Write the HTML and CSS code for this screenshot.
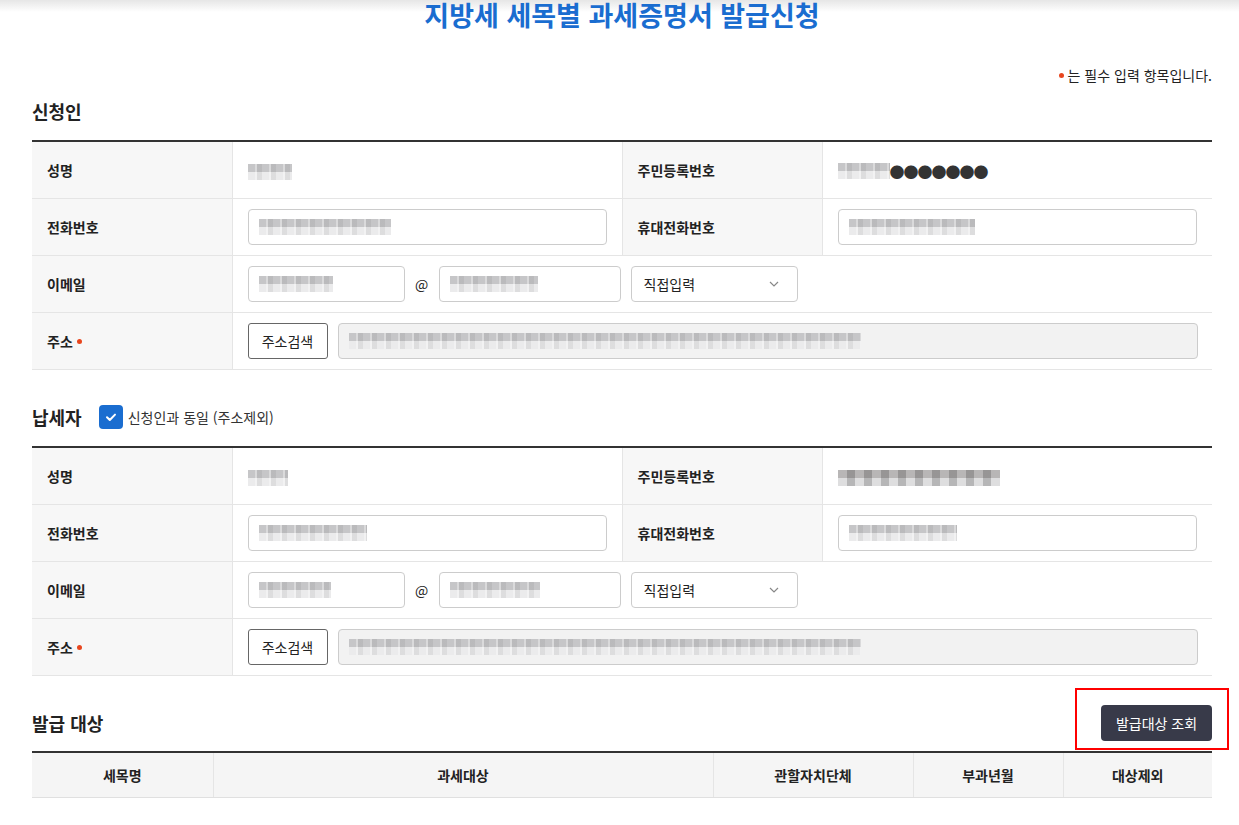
FILE: index.html
```html
<!DOCTYPE html>
<html lang="ko">
<head>
  <meta charset="UTF-8">
  <meta name="viewport" content="width=device-width, initial-scale=1.0">
  <title>지방세 세목별 과세증명서 발급신청</title>
  <link rel="stylesheet" href="styles.css">
</head>
<body>
  <div class="top-shade"></div>
  <div class="container">
    <h1 class="page-title">지방세 세목별 과세증명서 발급신청</h1>
    <p class="required-note"><span class="req-dot"></span>는 필수 입력 항목입니다.</p>

    <!-- 신청인 -->
    <div class="section-head first">
      <h2>신청인</h2>
    </div>
    <table class="form-table">
      <colgroup>
        <col class="c-label"><col class="c-value"><col class="c-label2"><col>
      </colgroup>
      <tr>
        <th>성명</th>
        <td><span class="mosaic" style="width:44px"></span></td>
        <th>주민등록번호</th>
        <td><span class="mosaic" style="width:52px"></span><span class="dots">●●●●●●●</span></td>
      </tr>
      <tr>
        <th>전화번호</th>
        <td><div class="input wide"><span class="mosaic" style="width:132px"></span></div></td>
        <th>휴대전화번호</th>
        <td><div class="input wide"><span class="mosaic" style="width:126px"></span></div></td>
      </tr>
      <tr>
        <th>이메일</th>
        <td colspan="3">
          <div class="email-row">
            <div class="input email-id"><span class="mosaic" style="width:74px"></span></div>
            <span class="at">@</span>
            <div class="input email-domain"><span class="mosaic" style="width:88px"></span></div>
            <div class="select">직접입력<svg width="10" height="6" viewBox="0 0 10 6"><path d="M1 1l4 4 4-4" fill="none" stroke="#888" stroke-width="1.2"/></svg></div>
          </div>
        </td>
      </tr>
      <tr>
        <th>주소<span class="req-dot"></span></th>
        <td colspan="3">
          <div class="addr-row">
            <button class="btn-line">주소검색</button>
            <div class="input addr"><span class="mosaic" style="width:512px"></span></div>
          </div>
        </td>
      </tr>
    </table>

    <!-- 납세자 -->
    <div class="section-head">
      <h2>납세자</h2>
      <label class="check">
        <span class="check-box"><svg width="14" height="14" viewBox="0 0 14 14"><path d="M3 7.2l2.8 2.8L11 4.6" fill="none" stroke="#fff" stroke-width="2" stroke-linecap="round" stroke-linejoin="round"/></svg></span>
        신청인과 동일 (주소제외)
      </label>
    </div>
    <table class="form-table last">
      <colgroup>
        <col class="c-label"><col class="c-value"><col class="c-label2"><col>
      </colgroup>
      <tr>
        <th>성명</th>
        <td><span class="mosaic" style="width:40px"></span></td>
        <th>주민등록번호</th>
        <td><span class="mosaic dark" style="width:162px"></span></td>
      </tr>
      <tr>
        <th>전화번호</th>
        <td><div class="input wide"><span class="mosaic" style="width:108px"></span></div></td>
        <th>휴대전화번호</th>
        <td><div class="input wide"><span class="mosaic" style="width:108px"></span></div></td>
      </tr>
      <tr>
        <th>이메일</th>
        <td colspan="3">
          <div class="email-row">
            <div class="input email-id"><span class="mosaic" style="width:72px"></span></div>
            <span class="at">@</span>
            <div class="input email-domain"><span class="mosaic" style="width:90px"></span></div>
            <div class="select">직접입력<svg width="10" height="6" viewBox="0 0 10 6"><path d="M1 1l4 4 4-4" fill="none" stroke="#888" stroke-width="1.2"/></svg></div>
          </div>
        </td>
      </tr>
      <tr>
        <th>주소<span class="req-dot"></span></th>
        <td colspan="3">
          <div class="addr-row">
            <button class="btn-line">주소검색</button>
            <div class="input addr"><span class="mosaic" style="width:512px"></span></div>
          </div>
        </td>
      </tr>
    </table>

    <!-- 발급 대상 -->
    <div class="section-head target-head">
      <h2>발급 대상</h2>
      <div class="btn-wrap">
        <button class="btn-dark">발급대상 조회</button>
        <span class="highlight"></span>
      </div>
    </div>
    <table class="list-table">
      <colgroup>
        <col style="width:181px"><col style="width:500px"><col style="width:200px"><col style="width:150px"><col>
      </colgroup>
      <thead>
        <tr>
          <th>세목명</th>
          <th>과세대상</th>
          <th>관할자치단체</th>
          <th>부과년월</th>
          <th>대상제외</th>
        </tr>
      </thead>
    </table>
  </div>
</body>
</html>
```

FILE: styles.css
```css
body {
  margin: 0;
  font-family: "Noto Sans CJK KR", "Noto Sans", sans-serif;
  color: #222;
  background-color: #fff;
}

.top-shade {
  position: absolute;
  top: 0;
  left: 0;
  right: 0;
  height: 12px;
  background: linear-gradient(to bottom, #e6e6e6, rgba(255, 255, 255, 0));
}

.container {
  width: 1180px;
  margin-left: 32px;
  position: relative;
}

.page-title {
  margin: 0;
  padding-top: 1px;
  height: 31px;
  line-height: 28px;
  text-align: center;
  font-size: 27px;
  font-weight: 700;
  color: #1a6dd0;
}

.required-note {
  margin: 33px 0 0;
  text-align: right;
  font-size: 14px;
  line-height: 20px;
  color: #222;
}

.req-dot {
  display: inline-block;
  width: 5px;
  height: 5px;
  border-radius: 50%;
  background-color: #e8461e;
  margin: 0 4px 3px 4px;
  vertical-align: middle;
}

.section-head {
  display: flex;
  align-items: center;
  height: 30px;
  margin-top: 0;
  margin-bottom: 14px;
}

.section-head.first {
  margin-top: 11px;
}

.section-head h2 {
  margin: 0;
  font-size: 18px;
  font-weight: 700;
  color: #222;
}

.form-table {
  width: 100%;
  border-collapse: collapse;
  border-top: 2px solid #333;
  table-layout: fixed;
  margin-bottom: 32px;
}

.form-table.last {
  margin-bottom: 29px;
}

.c-label { width: 200px; }
.c-value { width: 390px; }
.c-label2 { width: 200px; }

.form-table th,
.form-table td {
  height: 56px;
  border-bottom: 1px solid #e5e5e5;
  padding: 0;
  font-size: 14px;
}

.form-table th {
  background-color: #f7f7f7;
  text-align: left;
  padding-left: 15px;
  font-weight: 700;
  border-right: 1px solid #e5e5e5;
}

.form-table td {
  padding-left: 15px;
  border-right: 1px solid #e5e5e5;
}

.form-table td:last-child {
  border-right: none;
}

.mosaic {
  display: inline-block;
  height: 16px;
  vertical-align: middle;
  background:
    repeating-linear-gradient(to right, rgba(255,255,255,0) 0 7px, rgba(255,255,255,0.35) 7px 9px, rgba(0,0,0,0.06) 9px 14px),
    linear-gradient(to bottom, #c6c6c8 0 50%, #ebebec 50% 100%);
}

.mosaic.dark {
  background:
    repeating-linear-gradient(to right, rgba(255,255,255,0) 0 9px, rgba(0,0,0,0.18) 9px 17px),
    linear-gradient(to bottom, #b8b6b6 0 50%, #dededf 50% 100%);
}

.dots {
  font-size: 15px;
  color: #333;
  vertical-align: middle;
  letter-spacing: -1px;
}

.input {
  box-sizing: border-box;
  height: 36px;
  border: 1px solid #ccc;
  border-radius: 4px;
  background-color: #fff;
  display: flex;
  align-items: center;
  padding-left: 10px;
}

.input.wide { width: 359px; }
.input.email-id { width: 157px; }
.input.email-domain { width: 182px; }
.input.addr {
  flex: 1;
  margin-right: 14px;
  background-color: #f2f2f2;
}

.email-row,
.addr-row {
  display: flex;
  align-items: center;
}

.at {
  width: 34px;
  text-align: center;
  font-size: 14px;
}

.select {
  box-sizing: border-box;
  width: 167px;
  height: 36px;
  margin-left: 10px;
  border: 1px solid #ccc;
  border-radius: 4px;
  display: flex;
  align-items: center;
  justify-content: space-between;
  padding: 0 18px 0 12px;
  font-size: 14px;
}

.btn-line {
  box-sizing: border-box;
  width: 80px;
  height: 36px;
  margin-right: 10px;
  border: 1px solid #666;
  border-radius: 3px;
  background-color: #fff;
  font-family: inherit;
  font-size: 14px;
  color: #222;
  padding: 0;
}

.check {
  display: flex;
  align-items: center;
  margin-left: 17px;
  font-size: 14px;
  color: #333;
}

.check-box {
  width: 24px;
  height: 24px;
  border-radius: 4px;
  background-color: #1a6dd0;
  display: flex;
  align-items: center;
  justify-content: center;
  margin-right: 5px;
}

.target-head {
  justify-content: space-between;
  height: 36px;
  margin-bottom: 10px;
}

.btn-wrap {
  position: relative;
}

.btn-dark {
  width: 111px;
  height: 36px;
  border: none;
  border-radius: 4px;
  background-color: #383a49;
  color: #fff;
  font-family: inherit;
  font-size: 14px;
  padding: 0;
}

.highlight {
  position: absolute;
  left: -26px;
  top: -17px;
  width: 150px;
  height: 58px;
  border: 2px solid #f00;
}

.list-table {
  width: 100%;
  border-collapse: collapse;
  border-top: 2px solid #333;
  table-layout: fixed;
}

.list-table th {
  height: 44px;
  padding: 0;
  background-color: #f5f5f5;
  border-bottom: 1px solid #e0e0e0;
  border-right: 1px solid #e5e5e5;
  font-size: 14px;
  font-weight: 700;
}

.list-table th:last-child {
  border-right: none;
}
```
